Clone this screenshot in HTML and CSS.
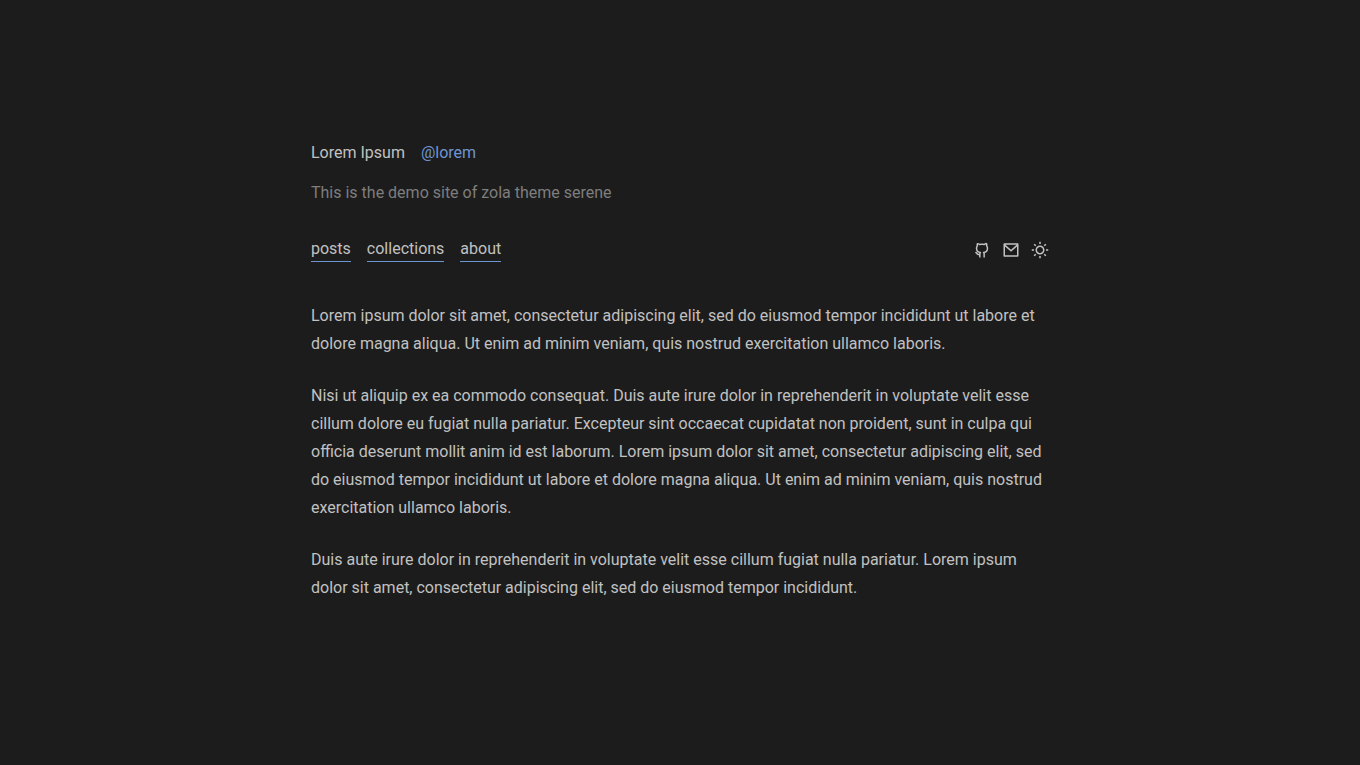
FILE: index.html
```html
<!DOCTYPE html>
<html lang="en">
<head>
<meta charset="utf-8">
<meta name="viewport" content="width=device-width, initial-scale=1">
<title>Lorem Ipsum</title>
<link rel="stylesheet" href="styles.css">
</head>
<body>
<main class="page">
  <header class="intro">
    <div class="identity">
      <span>Lorem Ipsum</span>
      <a class="handle" href="#lorem">@lorem</a>
    </div>
    <p class="bio">This is the demo site of zola theme serene</p>
  </header>
  <div class="bar">
    <nav class="sections">
      <a class="section-link" href="#posts">posts</a>
      <a class="section-link" href="#collections">collections</a>
      <a class="section-link" href="#about">about</a>
    </nav>
    <div class="actions">
      <a class="action" href="#github" aria-label="GitHub">
        <svg class="icon" viewBox="0 0 24 24" aria-hidden="true"><path d="M5.884 18.653C5.584 18.453 5.326 18.198 5.024 17.837C4.915 17.707 4.473 17.152 4.558 17.258C4.095 16.683 3.803 16.417 3.502 16.309C2.982 16.123 2.711 15.55 2.898 15.03C3.084 14.51 3.657 14.24 4.177 14.426C4.929 14.696 5.438 15.161 6.124 16.014C6.03 15.897 6.464 16.441 6.557 16.553C6.748 16.78 6.887 16.918 6.996 16.991C7.201 17.128 7.585 17.187 8.147 17.131C8.171 16.749 8.241 16.378 8.349 16.036C5.381 15.31 3.701 13.395 3.701 9.64C3.701 8.401 4.07 7.284 4.759 6.348C4.542 5.454 4.574 4.373 5.061 3.156C5.173 2.877 5.404 2.663 5.69 2.574C5.772 2.55 5.818 2.539 5.899 2.527C6.702 2.403 7.836 2.697 9.314 3.623C10.181 3.419 11.089 3.315 12.001 3.315C12.913 3.315 13.82 3.419 14.685 3.623C16.162 2.69 17.299 2.396 18.107 2.527C18.192 2.54 18.265 2.558 18.325 2.578C18.606 2.67 18.832 2.882 18.941 3.156C19.428 4.373 19.461 5.453 19.243 6.347C19.934 7.283 20.301 8.392 20.301 9.64C20.301 13.397 18.627 15.305 15.659 16.032C15.784 16.447 15.85 16.911 15.85 17.412V22H13.85V17.412C13.85 16.799 13.7 16.354 13.427 16.118C12.766 15.547 13.089 14.462 13.957 14.363C16.902 14.026 18.301 12.893 18.301 9.64C18.301 8.661 17.977 7.837 17.367 7.152C17.114 6.868 17.043 6.467 17.183 6.114C17.35 5.697 17.418 5.162 17.263 4.551L17.254 4.554C16.763 4.693 16.138 4.997 15.374 5.517C15.131 5.682 14.828 5.732 14.544 5.653C13.737 5.43 12.873 5.315 12.001 5.315C11.13 5.315 10.267 5.43 9.459 5.653C9.177 5.731 8.875 5.682 8.632 5.519C7.865 5.003 7.236 4.698 6.741 4.555C6.585 5.164 6.653 5.698 6.82 6.114C6.96 6.467 6.889 6.868 6.636 7.152C6.029 7.832 5.701 8.673 5.701 9.64C5.701 12.886 7.1 14.026 10.029 14.363C10.895 14.463 11.22 15.545 10.561 16.117C10.369 16.285 10.13 16.849 10.13 17.412V22H8.13V19.138C7.208 19.212 6.478 19.05 5.884 18.653Z"/></svg>
      </a>
      <a class="action" href="#mail" aria-label="Email">
        <svg class="icon" viewBox="0 0 24 24" aria-hidden="true"><path d="M3 3H21C21.552 3 22 3.448 22 4V20C22 20.552 21.552 21 21 21H3C2.448 21 2 20.552 2 20V4C2 3.448 2.448 3 3 3ZM20 7.238L12.072 14.338L4 7.216V19H20V7.238ZM4.511 5L12.062 11.662L19.502 5H4.511Z"/></svg>
      </a>
      <button class="action" type="button" aria-label="Switch theme">
        <svg class="icon" viewBox="0 0 24 24" aria-hidden="true"><path d="M12 18C8.686 18 6 15.314 6 12C6 8.686 8.686 6 12 6C15.314 6 18 8.686 18 12C18 15.314 15.314 18 12 18ZM12 16C14.209 16 16 14.209 16 12C16 9.791 14.209 8 12 8C9.791 8 8 9.791 8 12C8 14.209 9.791 16 12 16ZM11 1H13V4H11V1ZM11 20H13V23H11V20ZM3.515 4.929L4.929 3.515L7.05 5.636L5.636 7.05L3.515 4.929ZM16.95 18.364L18.364 16.95L20.485 19.071L19.071 20.485L16.95 18.364ZM19.071 3.515L20.485 4.929L18.364 7.05L16.95 5.636L19.071 3.515ZM5.636 16.95L7.05 18.364L4.929 20.485L3.515 19.071L5.636 16.95ZM23 11V13H20V11H23ZM4 11V13H1V11H4Z"/></svg>
      </button>
    </div>
  </div>
  <article class="prose">
    <p>Lorem ipsum dolor sit amet, consectetur adipiscing elit, sed do eiusmod tempor incididunt ut labore et dolore magna aliqua. Ut enim ad minim veniam, quis nostrud exercitation ullamco laboris.</p>
    <p>Nisi ut aliquip ex ea commodo consequat. Duis aute irure dolor in reprehenderit in voluptate velit esse cillum dolore eu fugiat nulla pariatur. Excepteur sint occaecat cupidatat non proident, sunt in culpa qui officia deserunt mollit anim id est laborum. Lorem ipsum dolor sit amet, consectetur adipiscing elit, sed do eiusmod tempor incididunt ut labore et dolore magna aliqua. Ut enim ad minim veniam, quis nostrud exercitation ullamco laboris.</p>
    <p>Duis aute irure dolor in reprehenderit in voluptate velit esse cillum fugiat nulla pariatur. Lorem ipsum dolor sit amet, consectetur adipiscing elit, sed do eiusmod tempor incididunt.</p>
  </article>
</main>
</body>
</html>
```
FILE: styles.css
```css
:root {
  --bg: #1c1c1c;
  --text: #c1c1c1;
  --muted: #7e7e7e;
  --accent: #6f94d2;
}

* {
  box-sizing: border-box;
}

body {
  margin: 0;
  background: var(--bg);
  color: var(--text);
  font: 16px/28px Roboto, sans-serif;
}

a {
  color: inherit;
  text-decoration: none;
}

p {
  margin: 0;
}

.page {
  max-width: 786px;
  margin: 0 auto;
  padding: 139px 24px;
}

.intro {
  display: grid;
  gap: 12px;
}

.identity {
  display: flex;
  gap: 16px;
}

.handle {
  color: var(--accent);
}

.bio {
  color: var(--muted);
}

.bar {
  display: flex;
  flex-wrap: wrap;
  justify-content: space-between;
  align-items: center;
  margin: 30px 0 40px;
}

.sections {
  display: flex;
  gap: 16px;
}

.section-link {
  border-bottom: 1px solid var(--accent);
  line-height: 24px;
}

.actions {
  display: flex;
  gap: 11px;
}

.action {
  display: flex;
  padding: 0;
  border: 0;
  background: none;
  color: inherit;
  cursor: pointer;
}

.icon {
  width: 18px;
  height: 18px;
  fill: currentColor;
}

.prose {
  display: grid;
  gap: 24px;
}
```
